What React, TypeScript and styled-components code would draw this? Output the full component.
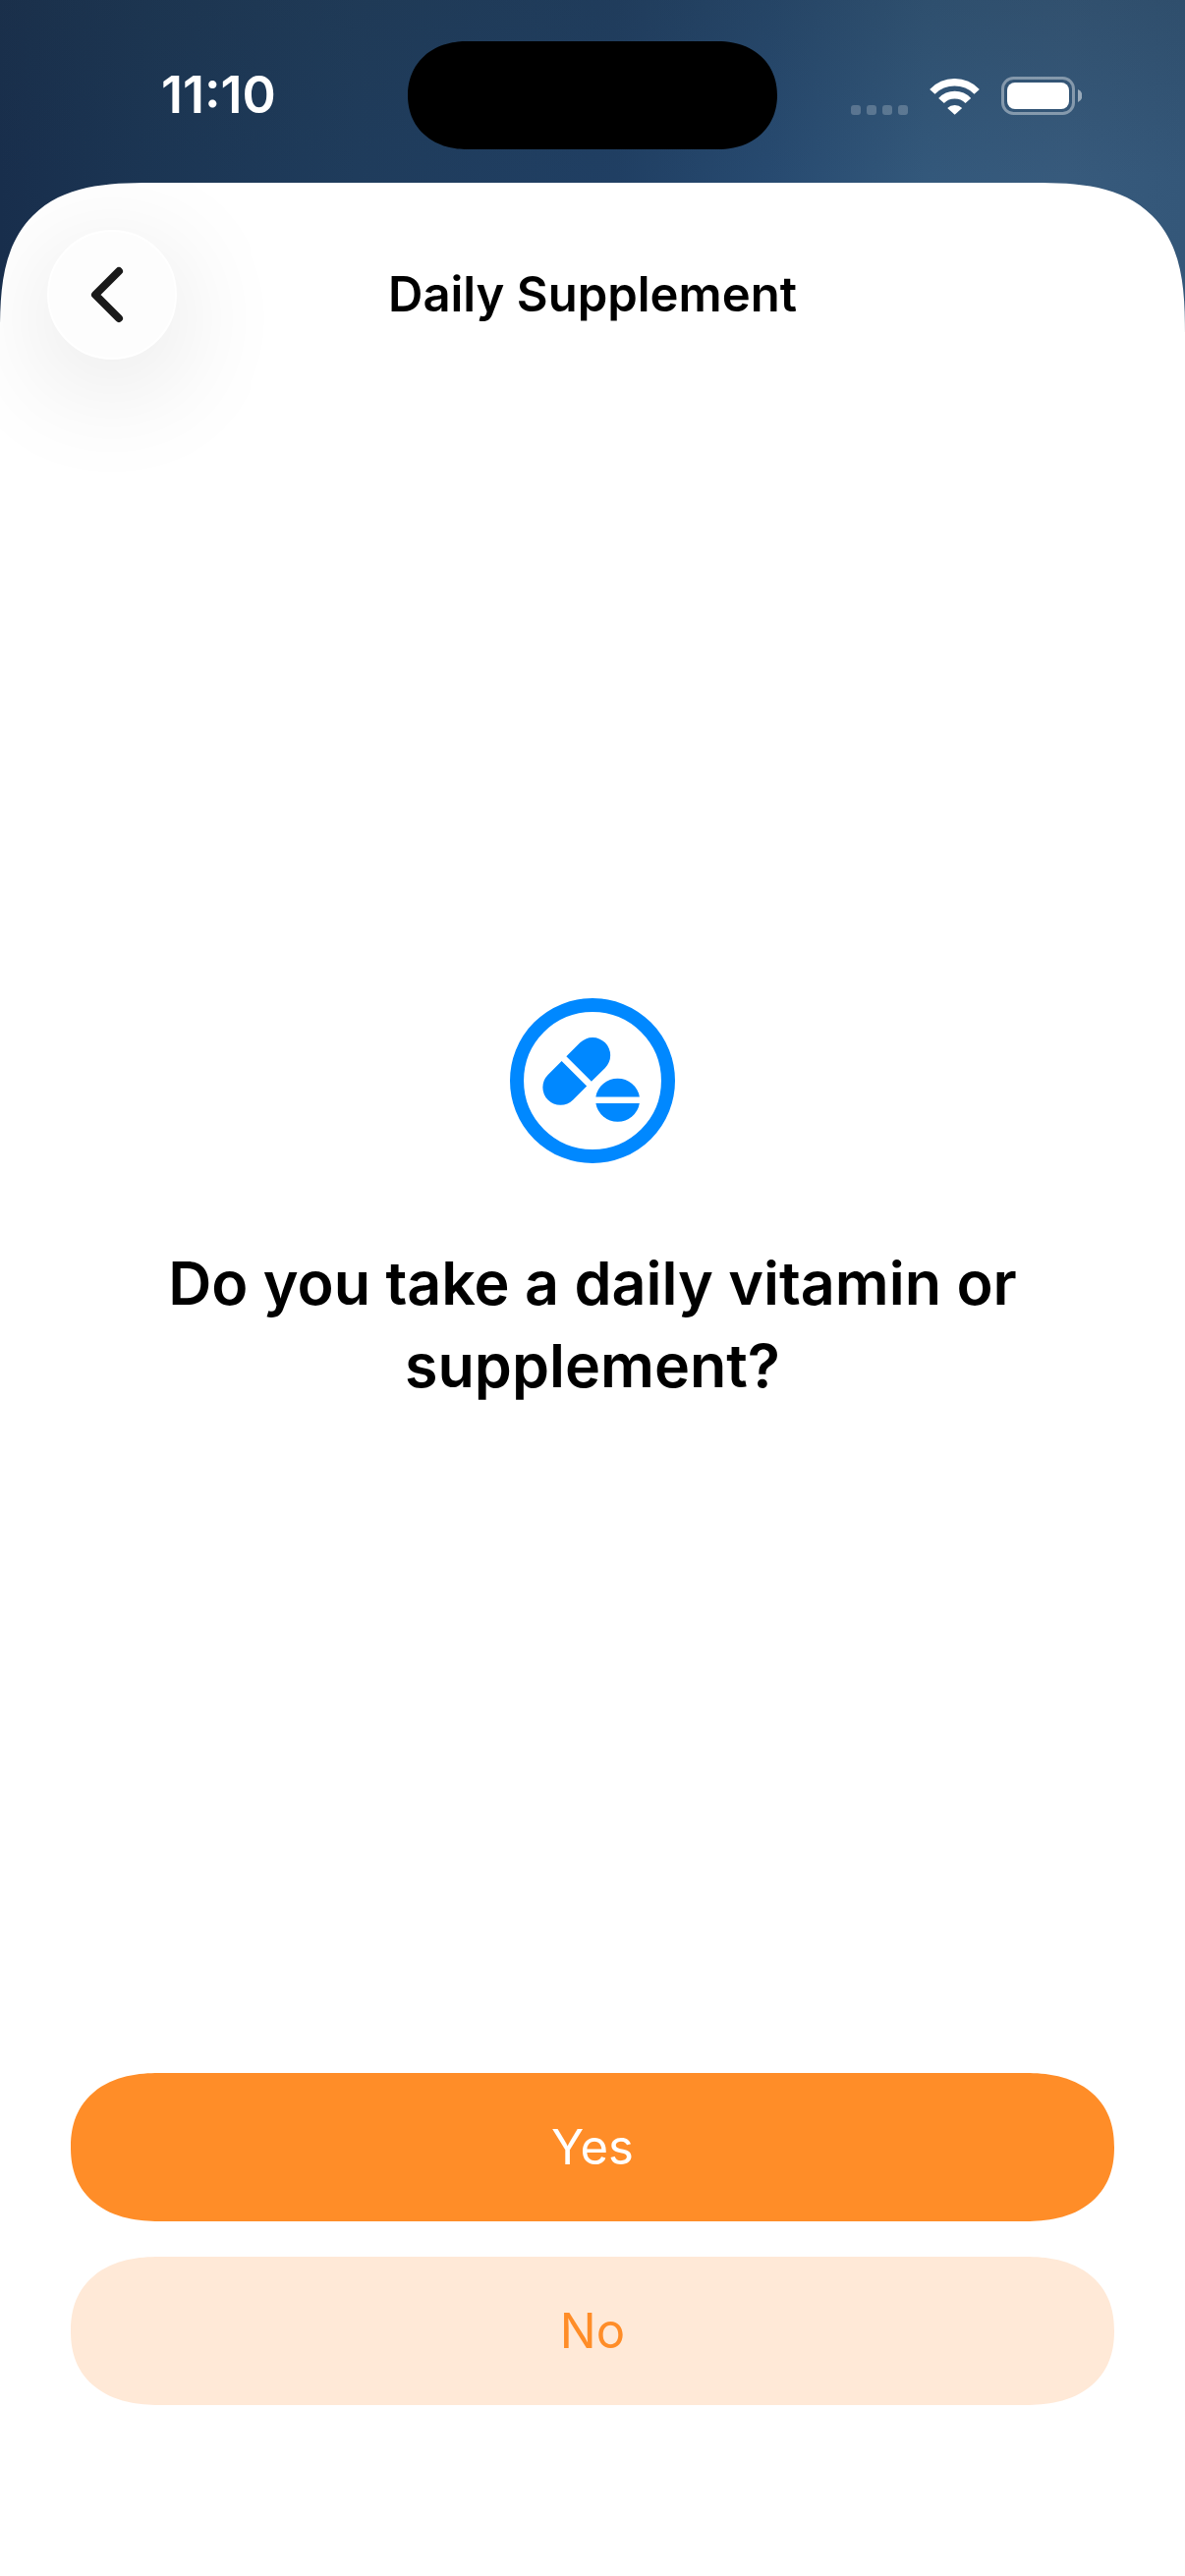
import React from "react";
import styled, { createGlobalStyle, css } from "styled-components";

const answers = [
   { label: "Yes", primary: true },
   { label: "No", primary: false },
];

function StatusBar() {
   return (
      <Status>
         <Time>11:10</Time>
         <Island />
         <Indicators>
            <Signal>
               {[0, 1, 2, 3].map((e) => (
                  <Dot key={e} />
               ))}
            </Signal>
            <WifiIcon viewBox="0 0 152 111" aria-label="Wi-Fi">
               <path d="M0 33A104 104 0 0 1 152 33L136 47A85 85 0 0 0 16 47Z" />
               <path d="M27 60A67 67 0 0 1 126 60L109 75A46 46 0 0 0 44 75Z" />
               <path d="M54 90A32 32 0 0 1 99 90L76.5 110Z" />
            </WifiIcon>
            <BatteryIcon viewBox="0 0 82 39" aria-label="Battery">
               <rect x="1.5" y="1.5" width="72" height="36" rx="11" fill="none" stroke="#fff" strokeOpacity="0.4" strokeWidth="3" />
               <rect x="6" y="6" width="63" height="27" rx="8" fill="#fff" />
               <path d="M78 13A7 7 0 0 1 78 26Z" fill="#fff" fillOpacity="0.5" />
            </BatteryIcon>
         </Indicators>
      </Status>
   );
}

function PillsIcon() {
   return (
      <Pills viewBox="0 0 502 502" aria-hidden="true">
         <circle cx="251" cy="251" r="230" fill="none" stroke="#0088ff" strokeWidth="42" />
         <g transform="translate(202.5 222.5) rotate(-45)">
            <path d="M10 -54H69A54 54 0 0 1 69 54H10Z" />
            <path d="M-10 -54H-69A54 54 0 0 0 -69 54H-10Z" />
         </g>
         <path d="M261 300A67.5 67.5 0 0 1 394 300Z" />
         <path d="M261 320A67.5 67.5 0 0 0 394 320Z" />
      </Pills>
   );
}

function App() {
   return (
      <Screen>
         <GlobalStyle />
         <StatusBar />
         <Sheet>
            <Header>
               <BackButton type="button" aria-label="Back">
                  <BackIcon viewBox="0 0 34 58">
                     <path d="M29 5L5 29L29 53" />
                  </BackIcon>
               </BackButton>
               <Title>Daily Supplement</Title>
            </Header>
            <Body>
               <PillsIcon />
               <Question>Do you take a daily vitamin or supplement?</Question>
            </Body>
            <Actions>
               {answers.map((e) => (
                  <AnswerButton key={e.label} type="button" $primary={e.primary}>
                     {e.label}
                  </AnswerButton>
               ))}
            </Actions>
         </Sheet>
      </Screen>
   );
}

export default App;

const GlobalStyle = createGlobalStyle`
   * {
      box-sizing: border-box;
   }

   body {
      margin: 0;
      font-family: Inter, "Liberation Sans", sans-serif;
      color: #000;
   }

   h1, h2 {
      margin: 0;
   }
`;

const Screen = styled.div`
   display: flex;
   flex-direction: column;
   min-height: 100vh;
   background:
      linear-gradient(180deg, rgba(32, 52, 70, 0.25), transparent 180px),
      linear-gradient(90deg, #182e4c 0%, #1b3553 12%, #1f3c5c 30%, #203f63 52%, #274a70 65%, #33587b 78%, #375a7c 90%, #345779 100%);
`;

const Status = styled.header`
   display: grid;
   grid-template-columns: 1fr 376px 1fr;
   align-items: center;
   justify-items: center;
   padding: 42px 30px 34px;
   color: #fff;
`;

const Time = styled.span`
   font-size: 52px;
   line-height: 60px;
   font-weight: 600;
`;

const Island = styled.div`
   width: 100%;
   height: 110px;
   border-radius: 55px;
   background: #000;

   @supports (corner-shape: superellipse(1.1)) {
      border-radius: 60px / 55px;
      corner-shape: superellipse(1.1);
   }
`;

const Indicators = styled.div`
   display: flex;
   align-items: flex-end;
   gap: 22px;
`;

const Signal = styled.div`
   display: flex;
   gap: 6px;
`;

const Dot = styled.span`
   width: 10px;
   height: 10px;
   border-radius: 3px;
   background: rgba(255, 255, 255, 0.22);
`;

const WifiIcon = styled.svg`
   width: 51px;
   height: 37px;
   fill: #fff;
`;

const BatteryIcon = styled.svg`
   width: 82px;
   height: 39px;
`;

const Sheet = styled.main`
   flex: 1;
   display: flex;
   flex-direction: column;
   overflow: hidden;
   border-radius: 114px 114px 0 0;
   background: #fff;

   @supports (corner-shape: superellipse(1.5)) {
      border-radius: 154px 154px 0 0;
      corner-shape: superellipse(1.5);
   }
`;

const Header = styled.div`
   display: grid;
   grid-template-columns: 132px 1fr 132px;
   align-items: center;
   padding: 48px 48px 0;
`;

const BackButton = styled.button`
   display: flex;
   align-items: center;
   justify-content: center;
   width: 132px;
   height: 132px;
   padding: 0 10px 0 0;
   border: 2px solid #fff;
   border-radius: 50%;
   background: #fdfdfd;
   box-shadow: 0 24px 120px rgba(0, 0, 0, 0.12);
   cursor: pointer;
`;

const BackIcon = styled.svg`
   width: 34px;
   height: 58px;
   fill: none;
   stroke: #1a1a1a;
   stroke-width: 8;
   stroke-linecap: round;
   stroke-linejoin: round;
`;

const Title = styled.h1`
   font-size: 49px;
   line-height: 60px;
   font-weight: 600;
   text-align: center;
`;

const Body = styled.section`
   flex: 1;
   display: flex;
   flex-direction: column;
   align-items: center;
   justify-content: center;
   gap: 80px;
   padding: 0 120px 28px;
`;

const Pills = styled.svg`
   width: 168px;
   height: 168px;
   fill: #0088ff;
`;

const Question = styled.h2`
   font-size: 61px;
   line-height: 84px;
   font-weight: 600;
   text-align: center;
`;

const Actions = styled.div`
   display: flex;
   flex-direction: column;
   gap: 36px;
   padding: 0 72px 174px;
`;

const primary = css`
   background: #ff8d28;
   color: #fff;
`;

const secondary = css`
   background: #ffe9d7;
   color: #ff8d28;
`;

const AnswerButton = styled.button<{ $primary: boolean }>`
   height: 151px;
   border: 0;
   border-radius: 76px;
   font-family: inherit;
   font-size: 49px;
   line-height: 60px;
   font-weight: 400;
   cursor: pointer;
   ${(props) => (props.$primary ? primary : secondary)}

   @supports (corner-shape: superellipse(1.2)) {
      border-radius: 90px / 76px;
      corner-shape: superellipse(1.2);
   }
`;
